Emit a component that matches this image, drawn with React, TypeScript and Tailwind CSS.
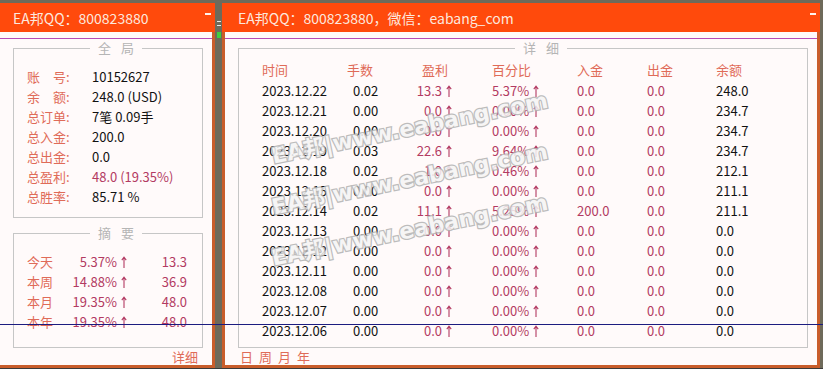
import React from "react";

const rows = [
  ["2023.12.22", "0.02", "13.3", "5.37%", "0.0", "0.0", "248.0"],
  ["2023.12.21", "0.00", "0.0", "0.00%", "0.0", "0.0", "234.7"],
  ["2023.12.20", "0.00", "0.0", "0.00%", "0.0", "0.0", "234.7"],
  ["2023.12.19", "0.03", "22.6", "9.64%", "0.0", "0.0", "234.7"],
  ["2023.12.18", "0.02", "1.0", "0.46%", "0.0", "0.0", "212.1"],
  ["2023.12.15", "0.00", "0.0", "0.00%", "0.0", "0.0", "211.1"],
  ["2023.12.14", "0.02", "11.1", "5.25%", "200.0", "0.0", "211.1"],
  ["2023.12.13", "0.00", "0.0", "0.00%", "0.0", "0.0", "0.0"],
  ["2023.12.12", "0.00", "0.0", "0.00%", "0.0", "0.0", "0.0"],
  ["2023.12.11", "0.00", "0.0", "0.00%", "0.0", "0.0", "0.0"],
  ["2023.12.08", "0.00", "0.0", "0.00%", "0.0", "0.0", "0.0"],
  ["2023.12.07", "0.00", "0.0", "0.00%", "0.0", "0.0", "0.0"],
  ["2023.12.06", "0.00", "0.0", "0.00%", "0.0", "0.0", "0.0"],
];

const overview = [
  { label: ["账", "号"], value: "10152627" },
  { label: ["余", "额"], value: "248.0 (USD)" },
  { label: ["总", "订", "单"], value: "7笔 0.09手" },
  { label: ["总", "入", "金"], value: "200.0" },
  { label: ["总", "出", "金"], value: "0.0" },
  { label: ["总", "盈", "利"], value: "48.0 (19.35%)", red: true },
  { label: ["总", "胜", "率"], value: "85.71 %" },
];

const summary = [
  ["今天", "5.37%", "13.3"],
  ["本周", "14.88%", "36.9"],
  ["本月", "19.35%", "48.0"],
  ["本年", "19.35%", "48.0"],
];

const Up = () => (
  <svg width="6" height="12" viewBox="0 0 6 12" className="ml-[4px] shrink-0">
    <path d="M3 1.5V12M0.8 4.2L3 1.2L5.2 4.2" fill="none" stroke="currentColor" strokeWidth="1.1" />
  </svg>
);

const Header = ({ text, pl }: { text: string; pl: string }) => (
  <div className={`flex h-[29px] shrink-0 items-center justify-between bg-[#ff4a0c] ${pl} pr-[4px] pt-[2px] text-[14px] text-[#fde8de]`}>
    <span className="whitespace-nowrap">{text}</span>
    <span className="mb-[9px] h-[2px] w-[6px] bg-[#fff2ec]" />
  </div>
);

const Watermark = ({ top }: { top: string }) => (
  <div
    className={`pointer-events-none absolute left-[272px] ${top} origin-left rotate-[-11.6deg] whitespace-nowrap font-['DejaVu_Sans','Noto_Sans_CJK_SC',sans-serif] text-[22px] leading-[22px] font-bold text-[#f5f5f5] [-webkit-text-stroke:2.5px_#b2b2b2] [paint-order:stroke_fill] opacity-85`}
  >
    EA邦|www.eabang.com
  </div>
);

export default function App() {
  return (
    <div className="relative h-[369px] w-[823px] overflow-hidden bg-[#6e6a5a] font-['Noto_Sans_CJK_SC',sans-serif] text-[13px] text-[#111]">
      <div className="flex h-[368px] pt-[3px]">
        {/* left panel */}
        <div className="flex w-[215px] flex-col">
          <Header text="EA邦QQ：800823880" pl="pl-[13px]" />
          <div className="flex flex-1 flex-col border-r-[3px] border-b-[3px] border-[#c95d2b] bg-[#fffafa]">
            <div className="mt-[6px] h-px bg-[#b84ab8]" />
            <fieldset className="ml-[13px] w-[190px] border border-[#c6c6c6] pt-[10px] pb-[10px] pl-[13px]">
              <legend className="ml-[63px] px-[8px] leading-[18px] text-[#b5b5b5]">
                全<span className="ml-[10px]">局</span>
              </legend>
              {overview.map((r) => (
                <div key={r.value} className="flex h-[20px] items-center">
                  <span className="flex w-[65px] text-[#df6b58]">
                    <span className="flex w-[39px] justify-between">
                      {r.label.map((c) => (
                        <span key={c}>{c}</span>
                      ))}
                    </span>
                    :
                  </span>
                  <span className={r.red ? "text-[#b33a62]" : ""}>{r.value}</span>
                </div>
              ))}
            </fieldset>
            <fieldset className="mt-[6px] ml-[13px] w-[190px] border border-[#c6c6c6] pt-[10px] pb-[15px] pl-[13px]">
              <legend className="ml-[63px] px-[8px] leading-[18px] text-[#b5b5b5]">
                摘<span className="ml-[10px]">要</span>
              </legend>
              {summary.map(([l, p, v]) => (
                <div key={l} className="flex h-[20px] items-center">
                  <span className="w-[40px] text-[#df6b58]">{l}</span>
                  <span className="flex w-[60px] items-center justify-end text-[#b33a62]">
                    {p}
                    <Up />
                  </span>
                  <span className="w-[60px] text-right text-[#b33a62]">{v}</span>
                </div>
              ))}
            </fieldset>
            <div className="flex h-[17px] items-center justify-end pr-[14px] text-[#df6b58]">详细</div>
          </div>
        </div>

        {/* gap with chart marks */}
        <div className="flex w-[7px] flex-col items-center pt-[18px]">
          <div className="h-px w-[4px] bg-[#e8e8e8]" />
          <div className="mt-[3px] h-px w-[4px] bg-[#e8e8e8]" />
          <div className="mt-[6px] h-[6px] w-[4px] bg-[#3fcf3f]" />
        </div>

        {/* right panel */}
        <div className="flex w-[598px] flex-col">
          <Header text="EA邦QQ：800823880，微信：eabang_com" pl="pl-[16px]" />
          <div className="flex flex-1 flex-col border-x-[3px] border-b-[3px] border-[#c95d2b] bg-[#fffafa]">
            <div className="mt-[6px] h-px bg-[#b84ab8]" />
            <fieldset className="ml-[13px] w-[570px] border border-[#c6c6c6] pt-[3px] pb-[6px] pl-[23px]">
              <legend className="ml-[253px] px-[8px] leading-[18px] text-[#b5b5b5]">
                详<span className="ml-[10px]">细</span>
              </legend>
              <div className="grid h-[20px] grid-cols-[85px_70px_75px_85px_70px_69px_1fr] items-center text-[#df6b58]">
                <span>时间</span>
                <span>手数</span>
                <span className="pl-[5px]">盈利</span>
                <span>百分比</span>
                <span>入金</span>
                <span>出金</span>
                <span>余额</span>
              </div>
              <div className="mt-[1px]">
                {rows.map((r) => (
                  <div key={r[0]} className="grid h-[20px] grid-cols-[85px_70px_75px_85px_70px_69px_1fr] items-center">
                    <span>{r[0]}</span>
                    <span className="pl-[6px]">{r[1]}</span>
                    <span className="flex items-center justify-end pr-[40px] text-[#b33a62]">
                      {r[2]}
                      <Up />
                    </span>
                    <span className="flex items-center text-[#b33a62]">
                      {r[3]}
                      <Up />
                    </span>
                    <span className="text-[#b33a62]">{r[4]}</span>
                    <span className="text-[#b33a62]">{r[5]}</span>
                    <span>{r[6]}</span>
                  </div>
                ))}
              </div>
            </fieldset>
            <div className="flex h-[17px] items-center gap-[6px] pl-[15px] text-[#df6b58]">
              <span>日</span>
              <span>周</span>
              <span>月</span>
              <span>年</span>
            </div>
          </div>
        </div>
      </div>
      <div className="h-px bg-[#3a3a3a]" />

      <Watermark top="top-[146px]" />
      <Watermark top="top-[197px]" />
      <Watermark top="top-[248px]" />

      <div className="absolute top-[324px] right-0 left-0 h-px bg-[#1c1c80]" />
    </div>
  );
}
